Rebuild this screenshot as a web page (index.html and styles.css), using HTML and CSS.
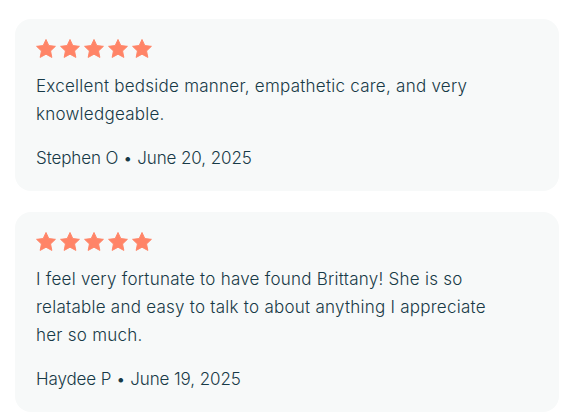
FILE: index.html
```html
<!DOCTYPE html>
<html>
<head>
<meta charset="utf-8">
<link rel="stylesheet" href="styles.css">
</head>
<body>
<div class="reviews">
  <div class="card">
    <div class="stars">
      <svg viewBox="0 0 24 24"><path d="M12 1.6l3.1 6.6 7.2.9-5.3 5 1.4 7.1L12 17.7l-6.4 3.5 1.4-7.1-5.3-5 7.2-.9z"/></svg>
      <svg viewBox="0 0 24 24"><path d="M12 1.6l3.1 6.6 7.2.9-5.3 5 1.4 7.1L12 17.7l-6.4 3.5 1.4-7.1-5.3-5 7.2-.9z"/></svg>
      <svg viewBox="0 0 24 24"><path d="M12 1.6l3.1 6.6 7.2.9-5.3 5 1.4 7.1L12 17.7l-6.4 3.5 1.4-7.1-5.3-5 7.2-.9z"/></svg>
      <svg viewBox="0 0 24 24"><path d="M12 1.6l3.1 6.6 7.2.9-5.3 5 1.4 7.1L12 17.7l-6.4 3.5 1.4-7.1-5.3-5 7.2-.9z"/></svg>
      <svg viewBox="0 0 24 24"><path d="M12 1.6l3.1 6.6 7.2.9-5.3 5 1.4 7.1L12 17.7l-6.4 3.5 1.4-7.1-5.3-5 7.2-.9z"/></svg>
    </div>
    <p class="text">Excellent bedside manner, empathetic care, and very knowledgeable.</p>
    <p class="meta">Stephen O • June 20, 2025</p>
  </div>
  <div class="card">
    <div class="stars">
      <svg viewBox="0 0 24 24"><path d="M12 1.6l3.1 6.6 7.2.9-5.3 5 1.4 7.1L12 17.7l-6.4 3.5 1.4-7.1-5.3-5 7.2-.9z"/></svg>
      <svg viewBox="0 0 24 24"><path d="M12 1.6l3.1 6.6 7.2.9-5.3 5 1.4 7.1L12 17.7l-6.4 3.5 1.4-7.1-5.3-5 7.2-.9z"/></svg>
      <svg viewBox="0 0 24 24"><path d="M12 1.6l3.1 6.6 7.2.9-5.3 5 1.4 7.1L12 17.7l-6.4 3.5 1.4-7.1-5.3-5 7.2-.9z"/></svg>
      <svg viewBox="0 0 24 24"><path d="M12 1.6l3.1 6.6 7.2.9-5.3 5 1.4 7.1L12 17.7l-6.4 3.5 1.4-7.1-5.3-5 7.2-.9z"/></svg>
      <svg viewBox="0 0 24 24"><path d="M12 1.6l3.1 6.6 7.2.9-5.3 5 1.4 7.1L12 17.7l-6.4 3.5 1.4-7.1-5.3-5 7.2-.9z"/></svg>
    </div>
    <p class="text">I feel very fortunate to have found Brittany! She is so relatable and easy to talk to about anything I appreciate her so much.</p>
    <p class="meta">Haydee P • June 19, 2025</p>
  </div>
</div>
</body>
</html>
```

FILE: styles.css
```css
html, body {
  margin: 0;
  background: #ffffff;
}
body {
  padding: 19px 14px 0 15px;
  font-family: Inter, "Liberation Sans", sans-serif;
  font-weight: 300;
  color: #173a47;
}
.reviews {
  display: flex;
  flex-direction: column;
  gap: 21px;
}
.card {
  background: #f7f9f9;
  border-radius: 16px;
  padding: 19px 21px 19px 21px;
}
.stars {
  display: flex;
  gap: 2px;
  height: 19px;
  margin-left: -1px;
}
.stars svg {
  width: 22px;
  height: 22px;
  fill: #ff8467;
  stroke: #ff8467;
  stroke-width: 1;
  stroke-linejoin: round;
}
.text {
  margin: 15px 0 0 0;
  font-size: 17px;
  line-height: 28px;
  letter-spacing: 0.25px;
  max-width: 462px;
}
.meta {
  margin: 16px 0 0 0;
  font-size: 17px;
  line-height: 28px;
  letter-spacing: -0.1px;
}
```
